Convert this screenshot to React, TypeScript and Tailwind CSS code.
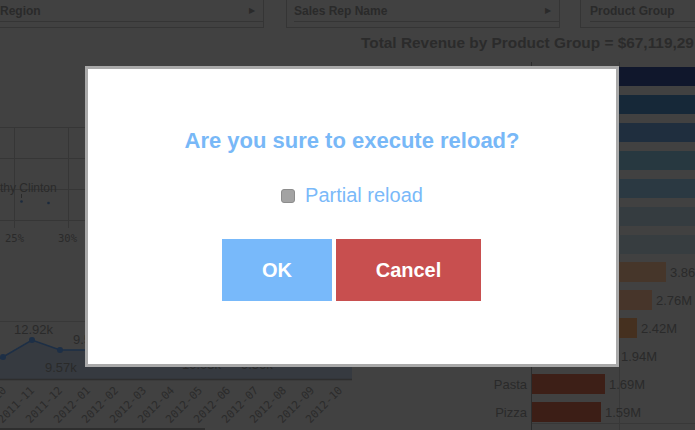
import React from "react";

const months = ["2011-10","2011-11","2011-12","2012-01","2012-02","2012-03","2012-04","2012-05","2012-06","2012-07","2012-08","2012-09","2012-10"];

function LeftCharts() {
  // svg origin at page (0,28)
  const oy = 28;
  const Y = (y: number) => y - oy;
  return (
    <svg width="355" height="402" viewBox="0 0 355 402" className="block">
      {[127, 158, 189, 220].map((y) => (
        <line key={y} x1="0" x2="355" y1={Y(y) + 0.5} y2={Y(y) + 0.5} stroke="#363636" strokeWidth="1" />
      ))}
      {[14, 68, 122, 176, 230, 284, 338].map((x) => (
        <line key={x} x1={x + 0.5} x2={x + 0.5} y1={Y(127)} y2={Y(228)} stroke="#363636" strokeWidth="1" />
      ))}
      <text x="0" y={Y(192)} fontSize="12" fill="#2a2a2a" fontFamily="'Liberation Sans', Arial, sans-serif">thy Clinton</text>
      <line x1="21.5" x2="21.5" y1={Y(194)} y2={Y(198)} stroke="#2a2a2a" strokeWidth="1" />
      <circle cx="21.5" cy={Y(201.5)} r="1.3" fill="#1b2a3d" />
      <circle cx="48.5" cy={Y(203)} r="1.3" fill="#1b2a3d" />
      <text x="5" y={Y(242)} fontSize="10.5" fill="#2a2a2a" fontFamily="'DejaVu Sans Mono', monospace">25%</text>
      <text x="58" y={Y(242)} fontSize="10.5" fill="#2a2a2a" fontFamily="'DejaVu Sans Mono', monospace">30%</text>

      <line x1="0" x2="352" y1={Y(321) + 0.5} y2={Y(321) + 0.5} stroke="#383838" strokeWidth="1" />
      <polygon
        points={`0,${Y(359)} 3,${Y(357)} 32,${Y(340)} 60,${Y(350)} 88,${Y(350)} 140,${Y(345)} 200,${Y(355)} 260,${Y(357)} 352,${Y(350)} 352,${Y(379)} 0,${Y(379)}`}
        fill="#363a40"
      />
      <polyline
        points={`-10,${Y(362)} 3,${Y(357)} 32,${Y(340)} 60,${Y(350)} 88,${Y(350)} 140,${Y(345)} 200,${Y(355)} 260,${Y(357)} 352,${Y(350)}`}
        fill="none"
        stroke="#1d2f46"
        strokeWidth="1.5"
      />
      <circle cx="3" cy={Y(357)} r="3" fill="#1d2f46" />
      <circle cx="32" cy={Y(340)} r="3" fill="#1d2f46" />
      <circle cx="60" cy={Y(350)} r="3" fill="#1d2f46" />
      <line x1="0" x2="352" y1={Y(379) + 0.5} y2={Y(379) + 0.5} stroke="#2e2e2e" strokeWidth="1.5" />
      <g fontSize="13" fill="#2a2a2a" fontFamily="'Liberation Sans', Arial, sans-serif">
        <text x="14" y={Y(334)}>12.92k</text>
        <text x="45" y={Y(372)}>9.57k</text>
        <text x="73" y={Y(344)}>9.58k</text>
        <text x="182" y={Y(369)}>10.05k</text>
        <text x="241" y={Y(369)}>9.56k</text>
      </g>
      <g fontSize="11" fill="#2b2b2b" fontFamily="'DejaVu Sans Mono', monospace">
        {months.map((m, i) => {
          const x = 7 + 28 * i;
          const y = Y(391);
          return (
            <text key={m} x={x} y={y} textAnchor="end" transform={`rotate(-45 ${x} ${y})`}>
              {m}
            </text>
          );
        })}
      </g>
      <line x1="0" x2="205" y1={Y(429)} y2={Y(429)} stroke="#2e2e2e" strokeWidth="2" />
    </svg>
  );
}

const blueBars = ["#10172c", "#162838", "#1f2e3e", "#273840", "#2b3942", "#353c40", "#373d40"];
const brownBars = [
  { end: 666, color: "#46362a", label: "3.86M", name: "" },
  { end: 652, color: "#47352a", label: "2.76M", name: "" },
  { end: 637, color: "#45301f", label: "2.42M", name: "" },
  { end: 617, color: "#42291d", label: "1.94M", name: "" },
  { end: 605, color: "#3d1f17", label: "1.69M", name: "Pasta" },
  { end: 601, color: "#3c1e16", label: "1.59M", name: "Pizza" },
];

function BarChart() {
  const ox = 355;
  const oy = 58;
  const X = (x: number) => x - ox;
  const Y = (y: number) => y - oy;
  return (
    <svg width="340" height="372" viewBox="0 0 340 372" className="block">
      <line x1={X(531.5)} x2={X(531.5)} y1={Y(62)} y2={Y(430)} stroke="#2c2c2c" strokeWidth="1" />
      <line x1={X(619.5)} x2={X(619.5)} y1={Y(62)} y2={Y(430)} stroke="#383838" strokeWidth="1" />
      <line x1={X(532)} x2={X(695)} y1={Y(423.5)} y2={Y(423.5)} stroke="#383838" strokeWidth="1" />
      {blueBars.map((c, i) => (
        <rect key={c} x={X(532)} y={Y(67 + 28 * i)} width={X(700) - X(532)} height="19" fill={c} />
      ))}
      {brownBars.map((b, j) => {
        const y = 262 + 28 * j;
        return (
          <g key={b.label}>
            <rect x={X(532)} y={Y(y)} width={b.end - 532} height="20" fill={b.color} />
            <text x={X(b.end + 4)} y={Y(y + 15)} fontSize="13" fill="#2a2a2a" fontFamily="'Liberation Sans', Arial, sans-serif">
              {b.label}
            </text>
            {b.name && (
              <text x={X(527)} y={Y(y + 15)} textAnchor="end" fontSize="13" fill="#2a2a2a" fontFamily="'Liberation Sans', Arial, sans-serif">
                {b.name}
              </text>
            )}
          </g>
        );
      })}
    </svg>
  );
}

function FilterBox({ label, className }: { label: string; className: string }) {
  return (
    <div className={`h-[28px] border border-[#353535] border-t-0 shrink-0 ${className}`}>
      <div className="h-[22px] border-b border-[#353535] flex items-center justify-between pr-[8px]">
        <span className="text-[12px] font-bold text-[#2a2a2a] leading-none">{label}</span>
        <span className="text-[8px] text-[#2a2a2a] leading-none">▶</span>
      </div>
    </div>
  );
}

export default function App() {
  return (
    <div
      className="relative w-[695px] h-[430px] overflow-hidden bg-[#414141]"
      style={{ fontFamily: "'Liberation Sans', Arial, sans-serif" }}
    >
      {/* top filter bar */}
      <div className="flex">
        <FilterBox label="Region" className="w-[265px] ml-[-1px] border-l-0 pl-[1px]" />
        <FilterBox label="Sales Rep Name" className="w-[274px] ml-[22px] pl-[7px]" />
        <FilterBox label="Product Group" className="w-[140px] ml-[20px] pl-[9px]" />
      </div>

      {/* main area */}
      <div className="flex">
        <div className="w-[355px] shrink-0">
          <LeftCharts />
        </div>
        <div className="flex flex-col">
          <div className="h-[30px] pl-[6px] flex items-center whitespace-nowrap text-[15.4px] font-bold text-[#2b2b2b]">
            Total Revenue by Product Group = $67,119,29
          </div>
          <BarChart />
        </div>
      </div>

      {/* modal */}
      <div className="absolute left-[85px] top-[66px] w-[534px] h-[301px] border-[3px] border-[#a9a9a9] bg-white flex flex-col items-center">
        <div className="pt-[59px] text-[22px] leading-[25px] font-bold text-[#78b8f7]">
          Are you sure to execute reload?
        </div>
        <div className="mt-[31px] flex items-center h-[22px]">
          <span className="w-[14px] h-[14px] rounded-[3px] bg-[#a3a3a3] border border-[#8c8c8c] mt-[1px]" />
          <span className="ml-[10px] text-[20px] leading-[22px] text-[#7ab9f9]">Partial reload</span>
        </div>
        <div className="mt-[33px] flex gap-[4px] ml-[-1px]">
          <div className="w-[110px] h-[62px] bg-[#78b9fa] flex items-center justify-center text-white text-[20px] font-bold">
            OK
          </div>
          <div className="w-[145px] h-[62px] bg-[#c84f4f] flex items-center justify-center text-white text-[20px] font-bold">
            Cancel
          </div>
        </div>
      </div>
    </div>
  );
}
